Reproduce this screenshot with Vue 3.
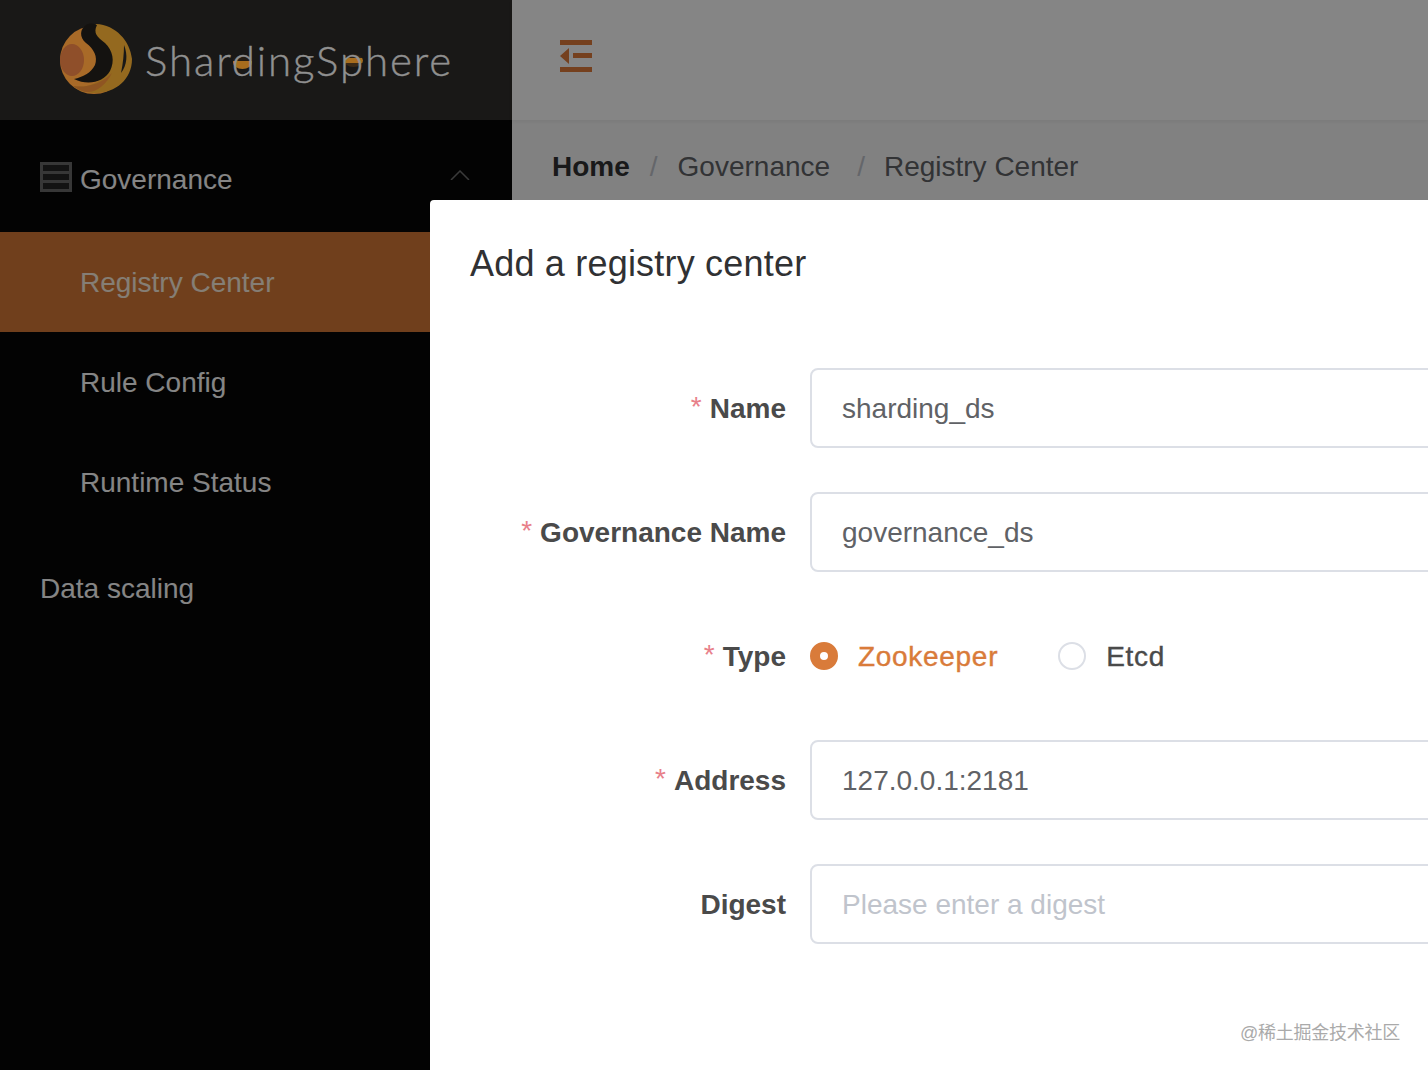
<script setup>
const menu = [
  { label: 'Registry Center', active: true },
  { label: 'Rule Config', active: false },
  { label: 'Runtime Status', active: false },
]
const crumbs = [
  { label: 'Governance', wide: false },
  { label: 'Registry Center', wide: true },
]
const fields = [
  { label: 'Name', required: true, value: 'sharding_ds' },
  { label: 'Governance Name', required: true, value: 'governance_ds' },
  { label: 'Type', required: true, radios: true },
  { label: 'Address', required: true, value: '127.0.0.1:2181' },
  { label: 'Digest', required: false, placeholder: 'Please enter a digest' },
]
</script>

<template>
  <div class="page">
    <aside class="sidebar">
      <div class="brand">
        <svg class="brand-mark" viewBox="0 0 72 72" width="72" height="72">
          <circle cx="34" cy="37" r="34" fill="#a86a28" />
          <path d="M36 1C56 2 70 18 72 36C72 56 56 70 35 70C27 70 19 68 13 63C25 65 37 62 45 52C51 43 49 33 41 25C35 19 30 9 36 1Z" fill="#94691f" />
          <path d="M13 63C25 65 40 62 52 50C46 62 36 70 26 69C21 68 17 66 13 63Z" fill="#8f5522" />
          <ellipse cx="12" cy="37" rx="12" ry="16" fill="#8f4f2a" />
          <path d="M26 2C20 6 19 14 26 20C34 26 38 34 35 42C31 50 23 54 14 56C28 63 44 59 50 48C55 38 53 28 45 20C37 14 33 10 37 2C33 0 29 0 26 2Z" fill="#141210" />
          <path d="M64 22C68 32 67 42 61 50C63 40 64 31 64 22Z" fill="#191817" />
        </svg>
        <span class="brand-text">
          ShardingSphere
          <i class="bowl bowl-d"></i>
          <i class="bowl bowl-p"></i>
        </span>
      </div>
      <nav class="nav">
        <div class="nav-title">
          <svg class="server" viewBox="0 0 32 30" width="32" height="30">
            <rect width="32" height="30" fill="#6a6a6a" />
            <rect x="3" y="3" width="26" height="6" fill="#262626" />
            <rect x="3" y="12" width="26" height="6" fill="#262626" />
            <rect x="3" y="21" width="26" height="6" fill="#262626" />
          </svg>
          <span class="nav-label">Governance</span>
          <svg class="chevron" viewBox="0 0 20 10" width="20" height="10">
            <path d="M1 10L10 1L19 10" fill="none" stroke="#707070" stroke-width="1.5" />
          </svg>
        </div>
        <div v-for="item in menu" :key="item.label" class="nav-item" :class="{ active: item.active }">
          <span>{{ item.label }}</span>
        </div>
        <div class="nav-root"><span>Data scaling</span></div>
      </nav>
    </aside>

    <main class="main">
      <header class="topbar">
        <svg class="fold" viewBox="0 0 32 32" width="32" height="32">
          <rect x="0" y="0" width="32" height="5" fill="#e07b3a" />
          <rect x="0" y="27" width="32" height="5" fill="#e07b3a" />
          <path d="M0 16L9 8V24Z" fill="#e07b3a" />
          <rect x="13" y="13" width="19" height="5" fill="#e07b3a" />
        </svg>
      </header>
      <div class="breadcrumb">
        <b class="crumb-home">Home</b>
        <template v-for="c in crumbs" :key="c.label">
          <span class="crumb-sep" :class="{ wide: c.wide }">/</span>
          <span class="crumb">{{ c.label }}</span>
        </template>
      </div>
    </main>

    <div class="mask"></div>

    <section class="dialog">
      <h2 class="dialog-title">Add a registry center</h2>
      <form class="form">
        <div v-for="f in fields" :key="f.label" class="row">
          <label class="label"><em v-if="f.required" class="star">*</em>{{ f.label }}</label>
          <div v-if="f.radios" class="radios">
            <span class="radio on"><i class="dot"></i><span>Zookeeper</span></span>
            <span class="radio"><i class="dot"></i><span>Etcd</span></span>
          </div>
          <div v-else class="input" :class="{ empty: !f.value }">{{ f.value || f.placeholder }}</div>
        </div>
      </form>
      <div class="watermark">@稀土掘金技术社区</div>
    </section>
  </div>
</template>

<style scoped>
.page {
  position: relative;
  width: 1428px;
  height: 1070px;
  overflow: hidden;
  display: flex;
  background: #fff;
  font-family: "Liberation Sans", Arial, sans-serif;
}
.sidebar {
  width: 512px;
  flex: none;
  background: #060606;
}
.brand {
  height: 120px;
  background: #302e2c;
  display: flex;
  align-items: center;
  padding-left: 60px;
  gap: 13px;
  box-sizing: border-box;
}
.brand-mark {
  position: relative;
  z-index: 2;
  margin-top: -2px;
  flex: none;
}
.brand-text {
  position: relative;
  z-index: 2;
  font-family: Lato, sans-serif;
  font-weight: 300;
  font-size: 42px;
  line-height: 50px;
  color: #909090;
  letter-spacing: 1.9px;
  -webkit-text-stroke: 0.4px currentColor;
  white-space: nowrap;
  margin-top: 0;
}
.bowl {
  position: absolute;
  z-index: -1;
  width: 19px;
  height: 13px;
  background: linear-gradient(#2a2118 0 30%, #a86d1e 30% 70%, #3a2a18 70%);
  border-radius: 50%;
}
.bowl-d {
  left: 88px;
  top: 21px;
  background: linear-gradient(#241c14 0 35%, #a86d1e 35%);
  border-radius: 30% 30% 50% 50%;
}
.bowl-p {
  left: 199px;
  top: 19px;
}
.nav {
  display: flex;
  flex-direction: column;
  font-size: 28px;
  color: #fff;
}
.nav-title {
  height: 112px;
  display: flex;
  align-items: center;
  padding: 8px 42px 0 40px;
  box-sizing: border-box;
}
.server { flex: none; margin-top: -6px; }
.nav-label {
  margin-left: 8px;
  flex: 1;
}
.chevron { margin-top: -10px; }
.nav-item {
  height: 100px;
  display: flex;
  align-items: center;
  padding: 2px 0 0 80px;
  box-sizing: border-box;
}
.nav-item.active {
  background: #d67a36;
  color: #fff2e0;
}
.nav-root {
  height: 112px;
  display: flex;
  align-items: center;
  padding: 2px 0 0 40px;
  box-sizing: border-box;
}
.main {
  flex: 1;
  background: #f8f8f8;
}
.topbar {
  height: 120px;
  background: #fff;
  box-shadow: 0 2px 4px rgba(0, 0, 0, 0.06);
  display: flex;
  align-items: center;
  padding-left: 48px;
  box-sizing: border-box;
}
.fold { margin-top: -8px; }
.breadcrumb {
  height: 92px;
  display: flex;
  align-items: center;
  padding: 2px 0 0 40px;
  box-sizing: border-box;
  font-size: 28px;
  color: #606266;
}
.crumb-home { color: #303133; }
.crumb-sep {
  margin: 0 20px;
  color: #c0c4cc;
}
.crumb-sep.wide {
  margin: 0 19px 0 27px;
}
.mask {
  position: absolute;
  inset: 0;
  z-index: 1;
  background: rgba(0, 0, 0, 0.48);
}
.dialog {
  position: absolute;
  z-index: 3;
  left: 430px;
  top: 200px;
  width: 1300px;
  height: 1000px;
  background: #fff;
  border-radius: 4px;
  padding: 40px 40px 0;
  box-sizing: border-box;
}
.dialog-title {
  margin: 0;
  font-size: 36px;
  line-height: 48px;
  font-weight: 400;
  letter-spacing: 0.2px;
  color: #303133;
}
.form {
  margin-top: 80px;
  display: flex;
  flex-direction: column;
  gap: 44px;
}
.row {
  display: flex;
  align-items: center;
  height: 80px;
}
.label {
  width: 316px;
  flex: none;
  text-align: right;
  font-size: 28px;
  line-height: 34px;
  padding-top: 2px;
  font-weight: 700;
  color: #4a4a4a;
  white-space: nowrap;
}
.star {
  font-style: normal;
  font-weight: 400;
  line-height: 0;
  color: #e8808a;
  margin-right: 8px;
  vertical-align: 2px;
}
.input {
  margin-left: 24px;
  flex: 1;
  height: 80px;
  box-sizing: border-box;
  border: 2px solid #dcdfe6;
  border-radius: 8px;
  padding: 2px 30px 0;
  display: flex;
  align-items: center;
  font-size: 28px;
  color: #606266;
}
.input.empty { color: #c0c4cc; }
.radios {
  margin-left: 24px;
  display: flex;
  gap: 60px;
  font-size: 28px;
  color: #4a4a4a;
}
.radio {
  display: flex;
  align-items: center;
  gap: 20px;
}
.radio span {
  padding-top: 2px;
  letter-spacing: 0.7px;
  -webkit-text-stroke: 0.4px currentColor;
}
.dot {
  width: 28px;
  height: 28px;
  box-sizing: border-box;
  border: 2px solid #dcdfe6;
  border-radius: 50%;
  background: #fff;
}
.radio.on { color: #d97b3a; }
.radio.on .dot {
  border: 10px solid #d97b3a;
}
.watermark {
  position: absolute;
  left: 810px;
  top: 821px;
  font-family: "Liberation Sans", "Noto Sans CJK SC", sans-serif;
  font-size: 18px;
  line-height: 24px;
  letter-spacing: -0.25px;
  color: #aaa;
  white-space: nowrap;
}
</style>
